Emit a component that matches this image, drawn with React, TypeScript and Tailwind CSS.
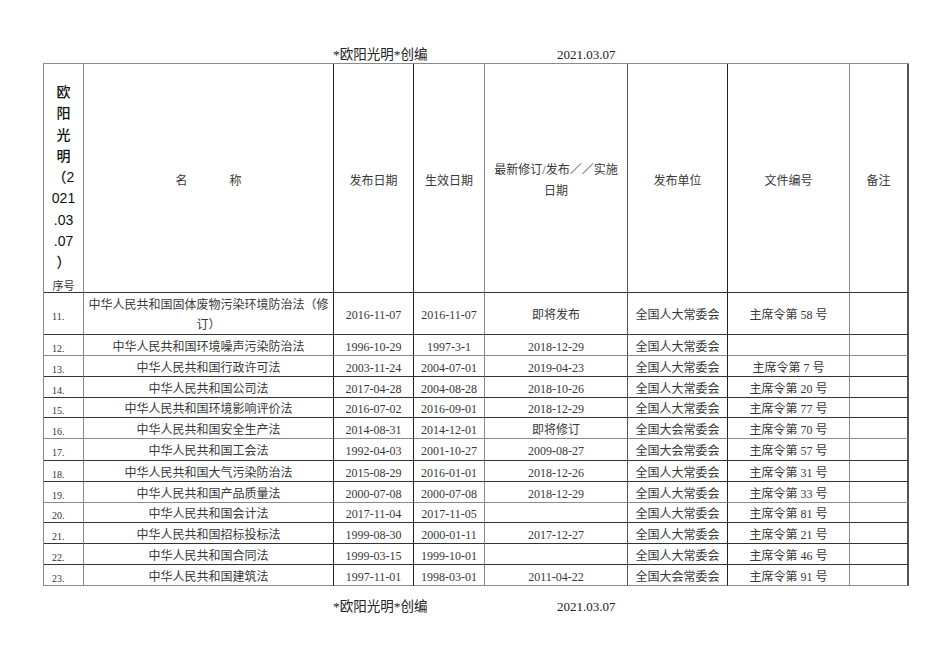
import React from "react";

const serif = { fontFamily: '"Liberation Serif", "Noto Sans CJK SC", serif' };

type Row = {
  no: string;
  name: React.ReactNode;
  pub: string;
  eff: string;
  rev: string;
  org: string;
  doc: string;
  h: string;
  line: string;
};

const rows: Row[] = [
  {
    no: "11.",
    name: (
      <>
        中华人民共和国固体废物污染环境防治法（修
        <br />
        订）
      </>
    ),
    pub: "2016-11-07",
    eff: "2016-11-07",
    rev: "即将发布",
    org: "全国人大常委会",
    doc: "主席令第 58 号",
    h: "h-[42px]",
    line: "border-b-[#3a3a3a]",
  },
  { no: "12.", name: "中华人民共和国环境噪声污染防治法", pub: "1996-10-29", eff: "1997-3-1", rev: "2018-12-29", org: "全国人大常委会", doc: "", h: "h-[21px]", line: "border-b-[#8a8a8a]" },
  { no: "13.", name: "中华人民共和国行政许可法", pub: "2003-11-24", eff: "2004-07-01", rev: "2019-04-23", org: "全国人大常委会", doc: "主席令第 7 号", h: "h-[21px]", line: "border-b-[#333]" },
  { no: "14.", name: "中华人民共和国公司法", pub: "2017-04-28", eff: "2004-08-28", rev: "2018-10-26", org: "全国人大常委会", doc: "主席令第 20 号", h: "h-[21px]", line: "border-b-[#333]" },
  { no: "15.", name: "中华人民共和国环境影响评价法", pub: "2016-07-02", eff: "2016-09-01", rev: "2018-12-29", org: "全国人大常委会", doc: "主席令第 77 号", h: "h-[20px]", line: "border-b-[#333]" },
  { no: "16.", name: "中华人民共和国安全生产法", pub: "2014-08-31", eff: "2014-12-01", rev: "即将修订", org: "全国大会常委会", doc: "主席令第 70 号", h: "h-[21px]", line: "border-b-[#8a8a8a]" },
  { no: "17.", name: "中华人民共和国工会法", pub: "1992-04-03", eff: "2001-10-27", rev: "2009-08-27", org: "全国大会常委会", doc: "主席令第 57 号", h: "h-[22px]", line: "border-b-[#333]" },
  { no: "18.", name: "中华人民共和国大气污染防治法", pub: "2015-08-29", eff: "2016-01-01", rev: "2018-12-26", org: "全国人大常委会", doc: "主席令第 31 号", h: "h-[21px]", line: "border-b-[#333]" },
  { no: "19.", name: "中华人民共和国产品质量法", pub: "2000-07-08", eff: "2000-07-08", rev: "2018-12-29", org: "全国人大常委会", doc: "主席令第 33 号", h: "h-[21px]", line: "border-b-[#8a8a8a]" },
  { no: "20.", name: "中华人民共和国会计法", pub: "2017-11-04", eff: "2017-11-05", rev: "", org: "全国人大常委会", doc: "主席令第 81 号", h: "h-[20px]", line: "border-b-[#333]" },
  { no: "21.", name: "中华人民共和国招标投标法", pub: "1999-08-30", eff: "2000-01-11", rev: "2017-12-27", org: "全国人大常委会", doc: "主席令第 21 号", h: "h-[21px]", line: "border-b-[#333]" },
  { no: "22.", name: "中华人民共和国合同法", pub: "1999-03-15", eff: "1999-10-01", rev: "", org: "全国人大常委会", doc: "主席令第 46 号", h: "h-[21px]", line: "border-b-[#333]" },
  { no: "23.", name: "中华人民共和国建筑法", pub: "1997-11-01", eff: "1998-03-01", rev: "2011-04-22", org: "全国大会常委会", doc: "主席令第 91 号", h: "h-[21px]", line: "border-b-[#8a8a8a]" },
];

// right border colour of each column
const colLine = [
  "border-r border-r-[#8a8a8a]",
  "border-r border-r-[#222]",
  "border-r border-r-[#222]",
  "border-r border-r-[#8a8a8a]",
  "border-r border-r-[#555]",
  "border-r border-r-[#222]",
  "border-r border-r-[#8a8a8a]",
  "border-r-2 border-r-[#555]",
];

const Banner = () => (
  <div className="flex pl-[333px] h-[16px] leading-[16px] text-[13.5px] text-[#222]" style={serif}>
    <span className="w-[224px]">*欧阳光明*创编</span>
    <span className="text-[13px]">2021.03.07</span>
  </div>
);

export default function App() {
  const cell = "flex items-center justify-center text-center border-b whitespace-nowrap";
  return (
    <div className="w-[950px] h-[672px] bg-white text-[#383838]" style={serif}>
      <div className="pt-[47px]">
        <Banner />
      </div>

      <div className="ml-[43px] w-[866px] grid grid-cols-[40px_250px_80px_71px_143px_100px_122px_59px] border-t border-l border-t-[#8a8a8a] border-l-[#8a8a8a] text-[12px] leading-[20px]">
        {/* header row */}
        <div className={`${colLine[0]} border-b border-b-[#333] h-[229px] flex flex-col items-center pt-[18px]`}>
          <div
            className="flex flex-col items-center text-[14px] leading-[21.3px] font-medium text-[#111]"
            style={{ fontFamily: '"Liberation Sans", "Noto Sans CJK SC", sans-serif' }}
          >
            <span>欧</span>
            <span>阳</span>
            <span>光</span>
            <span>明</span>
            <span>（2</span>
            <span>021</span>
            <span>.03</span>
            <span>.07</span>
            <span>）</span>
          </div>
          <span className="mt-[4px] text-[11px] leading-[14px] text-[#333]" style={{ fontFamily: '"Noto Sans CJK SC", sans-serif' }}>
            序号
          </span>
        </div>
        <div className={`${colLine[1]} ${cell} border-b-[#333] pt-[5px] gap-[42px]`}>
          <span>名</span>
          <span>称</span>
        </div>
        <div className={`${colLine[2]} ${cell} border-b-[#333] pt-[5px]`}>发布日期</div>
        <div className={`${colLine[3]} ${cell} border-b-[#333] pt-[5px]`}>生效日期</div>
        <div className={`${colLine[4]} ${cell} border-b-[#333] pt-[5px] leading-[21px]`}>
          <span>
            最新修订/发布／／实施
            <br />
            日期
          </span>
        </div>
        <div className={`${colLine[5]} ${cell} border-b-[#333] pt-[5px]`}>发布单位</div>
        <div className={`${colLine[6]} ${cell} border-b-[#333] pt-[5px]`}>文件编号</div>
        <div className={`${colLine[7]} ${cell} border-b-[#333] pt-[5px]`}>备注</div>

        {/* data rows */}
        {rows.map((r) => (
          <React.Fragment key={r.no}>
            <div className={`${colLine[0]} ${r.h} ${r.line} border-b flex items-center pl-[8px] pt-[7px] text-[10px] leading-[12px] text-[#333]`}>
              {r.no}
            </div>
            <div className={`${colLine[1]} ${r.h} ${r.line} ${cell} pt-[3px]`}>
              <span>{r.name}</span>
            </div>
            <div className={`${colLine[2]} ${r.h} ${r.line} ${cell} pt-[3px]`}>{r.pub}</div>
            <div className={`${colLine[3]} ${r.h} ${r.line} ${cell} pt-[3px]`}>{r.eff}</div>
            <div className={`${colLine[4]} ${r.h} ${r.line} ${cell} pt-[3px]`}>{r.rev}</div>
            <div className={`${colLine[5]} ${r.h} ${r.line} ${cell} pt-[3px]`}>{r.org}</div>
            <div className={`${colLine[6]} ${r.h} ${r.line} ${cell} pt-[3px]`}>{r.doc}</div>
            <div className={`${colLine[7]} ${r.h} ${r.line} ${cell} pt-[3px]`}></div>
          </React.Fragment>
        ))}
      </div>

      <div className="mt-[13px]">
        <Banner />
      </div>
    </div>
  );
}
